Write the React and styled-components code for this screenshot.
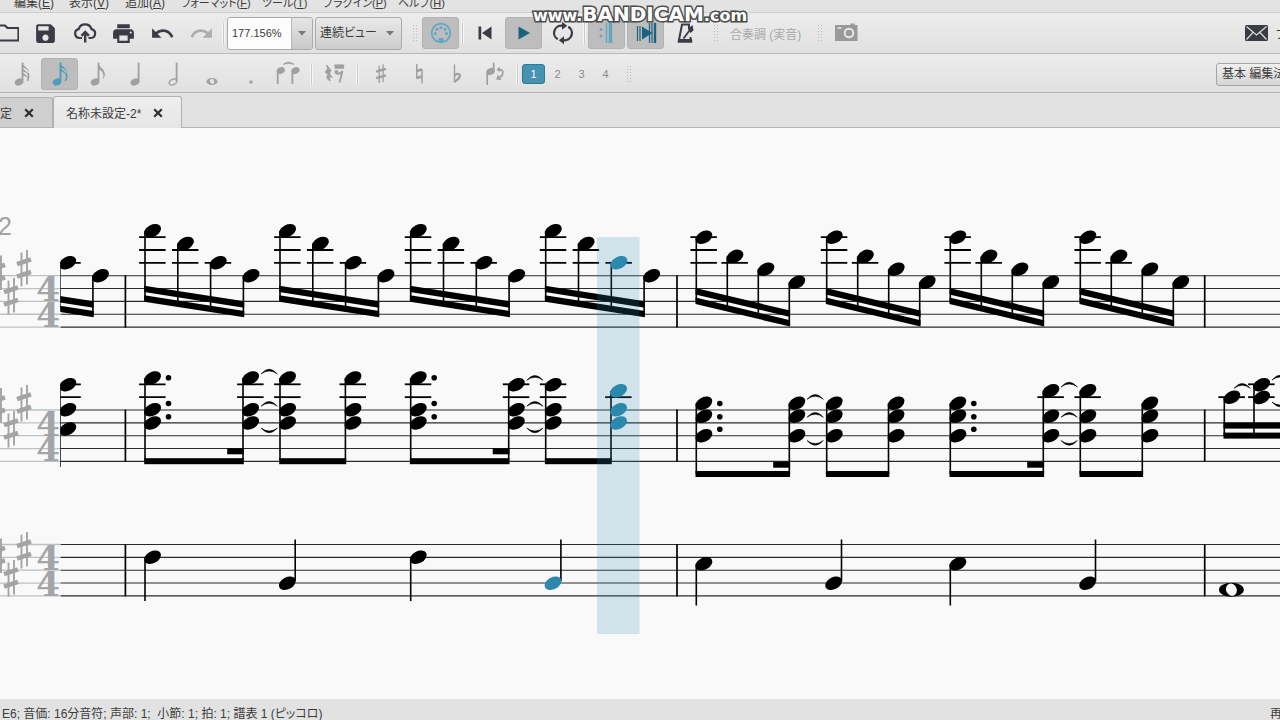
import React from 'react'
import styled, { createGlobalStyle, css } from 'styled-components'
import { MdSave, MdPrint, MdUndo, MdRedo } from 'react-icons/md'

const INK = '#3a3b44'
const MUTED = '#a0a0a0'
const BLUE = '#2e87ad'
const LIGHTBLUE = '#62a6c2'
const TEAL = '#1b6280'

const GlobalStyle = createGlobalStyle`
  * { box-sizing: border-box; }
  body {
    margin: 0;
    overflow: hidden;
    background: #e3e3e3;
    color: #3c3c3c;
    font-family: "Liberation Sans", "Noto Sans CJK JP", sans-serif;
    font-size: 12px;
  }
  button, select, input { font: inherit; color: inherit; }
  svg { flex: none; }
`

const Window = styled.div`
  display: flex;
  flex-direction: column;
  height: 100vh;
  overflow: hidden;
`

//Menu
const MenuBar = styled.nav`
  display: grid;
  grid-template-columns: 55px 56px 56px 81px 61px 75px 60px;
  align-content: end;
  flex: none;
  height: 12px;
  padding-left: 14px;
  overflow: hidden;
  white-space: nowrap;
`
const MenuLink = styled.a`
  color: inherit;
  text-decoration: none;
  line-height: 18px;
  font-size: ${p => (p.$kana ? '11px' : '12px')};
  font-feature-settings: "palt";
`

//Toolbars
const Toolbar = styled.div`
  display: flex;
  align-items: center;
  flex: none;
  gap: ${p => p.$gap}px;
  height: ${p => p.$height}px;
  padding: ${p => p.$pad || 0};
  overflow: hidden;
  border-top: 1px solid ${p => p.$edge};
  background: linear-gradient(#ececec, #e1e1e1);
`
const ToolButton = styled.button`
  display: flex;
  align-items: center;
  justify-content: center;
  flex: none;
  width: 37px;
  height: 32px;
  padding: 0;
  border: 1px solid transparent;
  border-radius: 3px;
  background: none;
  ${p => p.$bleed && css`margin-left: -12px;`}
  ${p => p.$on && css`
    background: #bdbdbd;
    border-color: #b3b3b3;
  `}
`
const Separator = styled.i`
  flex: none;
  width: ${p => p.$width}px;
  height: 21px;
  background: linear-gradient(#c9c9c9, #c9c9c9) center / 1px 100% no-repeat,
    linear-gradient(#f6f6f6, #f6f6f6) center / 3px 100% no-repeat;
`
const Grip = styled.i`
  flex: none;
  width: 6px;
  height: 18px;
  margin: 0 2px 0 8px;
  background: radial-gradient(circle, #bcbcbc 35%, transparent 45%) 0 0 / 3px 3px;
`
const ZoomBox = styled.div`
  display: flex;
  flex: none;
  width: 86px;
  height: 33px;
  border: 1px solid #ababab;
  border-radius: 3px;
  overflow: hidden;
`
const ZoomInput = styled.input`
  flex: 1;
  min-width: 0;
  padding: 0 0 0 4px;
  border: 0;
  background: #fcfcfc;
  font-size: 11px;
`
const ArrowButton = styled.button`
  display: flex;
  align-items: center;
  justify-content: center;
  width: 21px;
  padding: 0;
  border: 0;
  border-left: 1px solid #b9b9b9;
  background: linear-gradient(#e6e6e6, #c9c9c9);
`
const SelectBox = styled.label`
  display: flex;
  align-items: center;
  flex: none;
  width: 87px;
  height: 33px;
  padding: 0 6px 0 4px;
  border: 1px solid #ababab;
  border-radius: 3px;
  background: linear-gradient(#e9e9e9, #cdcdcd);
`
const ViewSelect = styled.select`
  appearance: none;
  flex: 1;
  min-width: 0;
  padding: 0;
  border: 0;
  background: none;
  font-feature-settings: "palt";
`
const PitchButton = styled.button`
  flex: none;
  padding: 0 6px 0 7px;
  border: 0;
  background: none;
  color: #a9a9a9;
  white-space: nowrap;
`
const FeedbackButton = styled.button`
  display: flex;
  align-items: center;
  gap: 7px;
  flex: none;
  width: 35px;
  margin-left: auto;
  padding: 0;
  border: 0;
  background: none;
  overflow: hidden;
`
const VoiceButton = styled.button`
  flex: none;
  width: 23px;
  height: 20px;
  padding: 0;
  border: 1px solid ${p => (p.$on ? '#2f7896' : 'transparent')};
  border-radius: 3px;
  background: ${p => (p.$on ? '#4792b0' : 'none')};
  color: ${p => (p.$on ? '#fff' : '#8a8a8a')};
  font-size: 11px;
`
const WorkspaceSlot = styled.div`
  flex: none;
  width: 64px;
  margin-left: auto;
  overflow: hidden;
`
const WorkspaceButton = styled.button`
  width: 90px;
  height: 23px;
  padding: 0 0 0 5px;
  border: 1px solid #a5a5a5;
  border-radius: 3px;
  background: linear-gradient(#efefef, #d6d6d6);
  text-align: left;
  line-height: 18px;
  white-space: nowrap;
`

//Document tabs
const TabBar = styled.div`
  display: flex;
  align-items: flex-end;
  flex: none;
  height: 36px;
  border-top: 1px solid #b4b4b4;
  border-bottom: 1px solid #b4b4b4;
  background: #e2e2e2;
`
const Tab = styled.div`
  display: flex;
  align-items: center;
  gap: 12px;
  flex: none;
  height: ${p => (p.$on ? 32 : 30)}px;
  margin-bottom: ${p => (p.$on ? -1 : 0)}px;
  margin-left: ${p => (p.$first ? -61 : 0)}px;
  padding: 0 18px 0 12px;
  border: 1px solid #b1b1b1;
  border-bottom: 0;
  border-radius: 3px 3px 0 0;
  background: ${p => (p.$on ? 'linear-gradient(#eeeeee, #e6e6e6)' : '#cfcfcf')};
`
const TabTitle = styled.span`
  white-space: nowrap;
`
const CloseButton = styled.button`
  display: flex;
  padding: 0;
  border: 0;
  background: none;
`

//Score
const ScoreArea = styled.main`
  flex: 1;
  min-height: 0;
  overflow: hidden;
  background: #f9f9f9;
`
const ScoreSvg = styled.svg`
  display: block;
  width: 100%;
  height: 100%;
`
const StatusBar = styled.footer`
  display: flex;
  justify-content: space-between;
  flex: none;
  height: 21px;
  padding: 6px 0 0 2px;
  overflow: hidden;
  background: #e2e2e2;
  line-height: 18px;
  white-space: pre;
`
const StatusText = styled.span`
  font-feature-settings: "palt";
`
const StatusMode = styled.span`
  width: 10px;
  overflow: hidden;
`

//Recorder stamp on top of everything
const Watermark = styled.div`
  position: absolute;
  top: 3px;
  left: 50%;
  transform: translateX(-50%);
  color: #fff;
  font: bold 16px/22px "DejaVu Sans", sans-serif;
  white-space: nowrap;
  -webkit-text-stroke: 3px #484848;
  paint-order: stroke fill;
  text-shadow: 0 0 2px #666;
  pointer-events: none;
`
const WatermarkBrand = styled.span`
  font-size: 20px;
`

const Icon = ({ w = 24, h = 24, children }) => (
  <svg width={w} height={h} viewBox={`0 0 ${w} ${h}`} fill="none" aria-hidden="true">{children}</svg>
)

const Triangle = () => (
  <Icon w={10} h={6}><path d="M1 1h8L5 5.600z" fill="#777" /></Icon>
)

const FolderIcon = () => (
  <Icon><path d="M3 19.500V4.500h7l2.500 2.500H23.500v12.500z" stroke={INK} strokeWidth="2.200" strokeLinejoin="round" /></Icon>
)
const CloudIcon = () => (
  <Icon>
    <path d="M9 17H6.500a4.500 4.500 0 0 1-.8-8.900 6.700 6.700 0 0 1 12.800 0A4.500 4.500 0 0 1 18 17h-2.500" stroke={INK} strokeWidth="2.200" />
    <path d="M12.200 21.500V12M8.500 14.800l3.700-3.800 3.700 3.800" stroke={INK} strokeWidth="2.400" />
  </Icon>
)
const MidiIcon = () => (
  <Icon>
    <circle cx="12" cy="12" r="9.300" stroke={LIGHTBLUE} strokeWidth="1.800" />
    <g fill={LIGHTBLUE}>
      <circle cx="6.300" cy="12.500" r="1.500" />
      <circle cx="8" cy="8.300" r="1.500" />
      <circle cx="12" cy="6.500" r="1.500" />
      <circle cx="16" cy="8.300" r="1.500" />
      <circle cx="17.700" cy="12.500" r="1.500" />
      <path d="M9.500 21v-4h5v4z" />
    </g>
  </Icon>
)
const RewindIcon = () => (
  <Icon><path d="M5.500 5.500h2.700v13H5.500zM18.500 5.500v13L9 12z" fill={INK} /></Icon>
)
const PlayIcon = () => (
  <Icon><path d="M6.500 5.500l11.500 6.500-11.500 6.500z" fill={TEAL} /></Icon>
)
const LoopIcon = () => (
  <Icon>
    <path d="M6.800 18.200A7.200 7.200 0 0 1 11.500 4.800M17.200 5.800A7.200 7.200 0 0 1 12.500 19.200" stroke={INK} strokeWidth="2.300" />
    <path d="M11 .8l5.200 4-5.200 4zM13 15.200l-5.200 4 5.200 4z" fill={INK} />
  </Icon>
)
const RepeatIcon = () => (
  <Icon>
    <path d="M11.500 2v20" stroke={LIGHTBLUE} strokeWidth="1.500" />
    <path d="M15.500 2v20" stroke={LIGHTBLUE} strokeWidth="3.500" />
    <circle cx="6" cy="8.500" r="1.500" fill={LIGHTBLUE} />
    <circle cx="6" cy="15" r="1.500" fill={LIGHTBLUE} />
  </Icon>
)
const PanIcon = () => (
  <Icon>
    <path d="M3.500 5v15M6 5v15M15.500 2v20M18 2v20" stroke={TEAL} strokeWidth="1.200" />
    <path d="M21 2v20" stroke={TEAL} strokeWidth="2.400" />
    <path d="M8 5.500l10.500 6.500L8 18.500z" fill={TEAL} />
  </Icon>
)
const MetronomeIcon = () => (
  <Icon>
    <path d="M16 8v-4.500H9L5.700 20.500h12.600l-1-4.500" stroke={INK} strokeWidth="2" />
    <path d="M5.500 18h13v3.500h-13z" fill={INK} />
    <path d="M10.500 17.500L18 7.500" stroke={INK} strokeWidth="1.800" />
    <path d="M15 8l4.500-4 1 5.500-3 2.500z" fill={INK} />
  </Icon>
)
const CameraIcon = () => (
  <Icon>
    <path d="M1 4h15.500V2.500h4V4H23.500v16H1z" fill="#999" />
    <path d="M3.500 7h4" stroke="#e8e8e8" strokeWidth="1.500" />
    <circle cx="15" cy="12" r="4.300" stroke="#e8e8e8" strokeWidth="2" />
  </Icon>
)
const MailIcon = () => (
  <Icon w={23} h={16}>
    <rect width="23" height="16" rx="1.500" fill={INK} />
    <path d="M1.500 1.500l10 8.500 10-8.500M1.500 14.500l6.500-7M21.500 14.500l-6.500-7" stroke="#dedede" strokeWidth="1.200" />
  </Icon>
)

const NoteIcon = ({ flags, color = MUTED }) => (
  <Icon w={24} h={28}>
    <ellipse cx="9" cy="22" rx="4.400" ry="3.400" transform="rotate(-25 9 22)" fill={color} />
    <path d="M12.500 21.500V2.500" stroke={color} strokeWidth="1.800" />
    {flags === 1 && <path d="M12 2.500c.6 4.800 6.800 6 6.800 11.500 0 2-.7 3.700-1.800 5.500 1.300-5.800-.5-8.800-5-10.500z" fill={color} />}
    {flags > 1 && [...Array(flags)].map((_, i) => (
      <path key={i} d={`M12 ${2.5 + i * 4}c.5 4 7 4.500 7 10-1-2.800-3.500-4.500-7-5.500z`} fill={color} />
    ))}
    {flags > 1 && <path d="M18.200 13c.9 2.500.6 5-.8 8" stroke={color} strokeWidth="1.500" />}
  </Icon>
)
const QuarterIcon = ({ half }) => (
  <Icon w={24} h={28}>
    {half
      ? <ellipse cx="11" cy="22" rx="4" ry="2.700" transform="rotate(-28 11 22)" stroke={MUTED} strokeWidth="1.300" />
      : <ellipse cx="11" cy="22" rx="4.500" ry="3.400" transform="rotate(-25 11 22)" fill={MUTED} />}
    <path d="M14.600 21.500V2.500" stroke={MUTED} strokeWidth="1.800" />
  </Icon>
)
const WholeIcon = () => (
  <Icon w={24} h={28}>
    <path fillRule="evenodd" d="M6.500 21.500a5.500 3.500 0 1 0 11 0a5.500 3.500 0 1 0-11 0zM9.800 20.500c-.3 2 1.200 3.300 2.700 3.200s1.900-1.300 1.700-2.200c-.3-2-1.500-2.500-2.700-2.400s-1.600.7-1.700 1.400z" fill={MUTED} />
  </Icon>
)
const DotIcon = () => (
  <Icon w={24} h={28}><circle cx="13" cy="22" r="1.700" fill={MUTED} /></Icon>
)
const TieIcon = () => (
  <Icon w={24} h={28}>
    <path d="M7 4.500c3-3 8-3 11 0-3-1.300-8-1.300-11 0z" fill={MUTED} stroke={MUTED} strokeWidth=".8" />
    <ellipse cx="4.800" cy="10.500" rx="4.200" ry="3.200" transform="rotate(-25 4.800 10.500)" fill={MUTED} />
    <ellipse cx="19.500" cy="10.500" rx="4.200" ry="3.200" transform="rotate(-25 19.500 10.500)" fill={MUTED} />
    <path d="M1.700 10.500V24M16.400 10.500V24" stroke={MUTED} strokeWidth="1.800" />
  </Icon>
)
const RestIcon = () => (
  <Icon w={24} h={28}>
    <path d="M3.500 5l4.300 5.500c-2 2-1.800 3.500.7 6.300-2.500-.5-3.300 1-1.300 4-3.500-2-4.800-5.300-1-5.500L2.500 12C5 9.500 5 8 3.500 5z" fill={MUTED} stroke={MUTED} strokeWidth="1.200" />
    <path d="M12 5h8.500v3.300H12zM11 5.300h10.500" fill={MUTED} stroke={MUTED} />
    <circle cx="13.500" cy="12" r="2" fill={MUTED} />
    <path d="M13 13.500c3 .8 5 0 6.500-2.500l-3 11.500" stroke={MUTED} strokeWidth="1.800" />
  </Icon>
)
const SharpGlyph = ({ color = MUTED }) => (
  <g stroke={color}>
    <path d="M-2.500-15.500V18.500M3-18v34.500" strokeWidth="1.900" />
    <path d="M-7-3.800L7-8.700M-7 8.700L7 3.800" strokeWidth="4.600" />
  </g>
)
const SharpIcon = () => (
  <Icon w={24} h={28}><g transform="translate(12 13.500) scale(.7 .52)"><SharpGlyph /></g></Icon>
)
const NaturalIcon = () => (
  <Icon w={24} h={28}>
    <path d="M9.800 4v14.500M15 9v14.500" stroke={MUTED} strokeWidth="1.500" />
    <path d="M9.500 11l5.500-1.500M9.500 18l5.500-1.500" stroke={MUTED} strokeWidth="2.700" />
  </Icon>
)
const FlatIcon = () => (
  <Icon w={24} h={28}>
    <path d="M9.500 4.500v18" stroke={MUTED} strokeWidth="1.500" />
    <path d="M9.500 15.500c3-2.800 5.700-1.500 5.300.8-.3 1.900-2.500 3.700-5.300 5.600" stroke={MUTED} strokeWidth="2.200" />
  </Icon>
)
const FlipIcon = () => (
  <Icon w={24} h={28}>
    <ellipse cx="7.500" cy="11.500" rx="4.400" ry="3.300" transform="rotate(-25 7.500 11.500)" fill={MUTED} />
    <path d="M4.200 12v13M10.700 11V2.500" stroke={MUTED} strokeWidth="1.700" />
    <path d="M15 9.500c4-1 6 2 4.500 5-.8 1.500-2 2.700-3.700 3.800" stroke={MUTED} strokeWidth="1.700" />
    <path d="M16.500 6.500l-3 3.500 4 2zM15 14.500l-2 5 5.500.5z" fill={MUTED} />
  </Icon>
)
const CloseIcon = () => (
  <Icon w={10} h={10}><path d="M1.200 1.200l7.600 7.600M8.800 1.200L1.200 8.800" stroke="#303030" strokeWidth="2.200" /></Icon>
)

// ---- score drawing ----
const STAVES = [275.7, 410, 544.5]
const BARLINES = [125.4, 677, 1204.7]
const LINE = 12.85

const Head = ({ stem, y, color = '#000' }) => (
  <ellipse cx={stem + 7.6} cy={y} rx="9" ry="6" transform={`rotate(-28 ${stem + 7.6} ${y})`} fill={color} />
)

// short lines above the staff down from the note
const Ledgers = ({ stem, y, top }) => {
  const lines = []
  for (let l = top - LINE; l > y - 4; l -= LINE) lines.push(l)
  return lines.map(l => (
    <path key={l} d={`M${stem - 5.9} ${l}h26.500`} stroke="#000" strokeWidth="1.800" />
  ))
}

const Stem = ({ x, from, to }) => <path d={`M${x} ${from}V${to}`} stroke="#000" strokeWidth="1.600" />

// four sixteenths under a sloped double beam
const Run = ({ x, step, ys, beam, drop, played }) => {
  const width = step * 3
  const yAt = i => beam + (drop * i) / 3
  const band = dy => `M${x - 0.8} ${beam + dy}L${x + width + 0.8} ${beam + drop + dy}v6.400L${x - 0.8} ${beam + dy + 6.4}z`
  return (
    <g>
      {ys.map((y, i) => (
        <g key={i}>
          <Ledgers stem={x + step * i} y={y} top={STAVES[0]} />
          <Stem x={x + step * i} from={y} to={yAt(i) + 14} />
          <Head stem={x + step * i} y={y} color={played === i ? BLUE : '#000'} />
        </g>
      ))}
      <path d={band(-0.3)} />
      <path d={band(9.3)} />
    </g>
  )
}

const Chord = ({ x, ys, to, dots = [], color }) => (
  <g>
    <Ledgers stem={x} y={ys[0]} top={STAVES[1]} />
    <Stem x={x} from={ys[0]} to={to} />
    {ys.map(y => <Head key={y} stem={x} y={y} color={color} />)}
    {dots.map(y => <circle key={y} cx={x + 23.5} cy={y} r="2.800" />)}
  </g>
)

const Beam = ({ from, to, y }) => <rect x={from - 0.8} y={y} width={to - from + 1.6} height="6" />

const Tie = ({ x, y, down }) => {
  const s = down ? 1 : -1
  return <path d={`M${x} ${y}q8.200 ${s * 9.6} 16.400 0q-8.200 ${s * 6} -16.400 0z`} stroke="#000" strokeWidth=".5" />
}

const RUN_A = [230.7, 243.6, 262.8, 275.7]
const RUN_B = [237.2, 256.4, 269.3, 282.3]
const D_CHORD = [378, 409.7, 423]
const C_CHORD = [384.7, 409.7, 423]
const B_CHORD = [390.7, 409.7, 423]
const E_LOW = [403.3, 416.3, 435.7]
const E_HIGH = [390.7, 416.3, 435.7]
const DOTS_A = [377.7, 403.5, 416.7]
const DOTS_B = [403.5, 416.7, 429.3]

const QUARTERS = [
  { x: 145, y: 557.3, down: 601 },
  { x: 279.7, y: 583.3 },
  { x: 410.7, y: 557.3, down: 601 },
  { x: 545.4, y: 583.3, color: BLUE },
  { x: 696.3, y: 563.7, down: 605.5 },
  { x: 826, y: 583.3 },
  { x: 950.3, y: 563.7, down: 605.5 },
  { x: 1080, y: 583.3 },
]

const PANEL_SHARPS = [
  [[-2, 273.5], [11, 296], [24, 268]],
  [[-2, 406], [11, 429], [24, 403]],
  [[-2, 556.5], [11, 578], [24, 550]],
]

function Score() {
  return (
    <ScoreSvg role="img" aria-label="楽譜">
      <defs>
        <clipPath id="music"><rect x="60.300" y="128" width="100%" height="600" /></clipPath>
      </defs>
      <g transform="translate(0 -128)">
        {STAVES.map((top, s) => (
          <g key={top}>
            {[0, 1, 2, 3, 4].map(i => (
              <g key={i}>
                <line x1="0" x2="60" y1={top + i * LINE} y2={top + i * LINE} stroke="#bdc1c0" strokeWidth="1.300" />
                <line x1="60.500" x2="100%" y1={top + i * LINE} y2={top + i * LINE} stroke="#2a2a2a" strokeWidth="1.100" />
              </g>
            ))}
            {PANEL_SHARPS[s].map(([x, y]) => (
              <g key={x} transform={`translate(${x} ${y})`}><SharpGlyph color="#a3a5a5" /></g>
            ))}
            {[2, 4].map(n => (
              <text key={n} x="48" y={top + n * LINE - 0.2} textAnchor="middle" fontFamily="DejaVu Serif" fontWeight="bold" fontSize="34" fill="#a3a5a8">4</text>
            ))}
            {BARLINES.map(x => (
              <path key={x} d={`M${x} ${top - 0.5}v${LINE * 4 + 1}`} stroke="#000" strokeWidth="1.700" />
            ))}
          </g>
        ))}
        <text x="-2" y="235" fontFamily="Liberation Sans" fontSize="25" fill="#a3a3a3">2</text>

        <g clipPath="url(#music)">
          <Run x={-5.5} step={32.8} ys={[300, 300, 262.8, 275.7]} beam={286} drop={15.6} />
          {[145, 280, 410.7].map(x => <Run key={x} x={x} step={32.8} ys={RUN_A} beam={286} drop={15.6} />)}
          <Run x={545.7} step={32.8} ys={RUN_A} beam={286} drop={15.6} played={2} />
          {[696.3, 826.7, 950.3, 1080.3].map(x => <Run key={x} x={x} step={31} ys={RUN_B} beam={288.3} drop={22.6} />)}

          <Chord x={60.2} ys={[384.7, 409.7, 429]} to={467} />

          <Chord x={145} ys={D_CHORD} to={460} dots={DOTS_A} />
          <Chord x={243} ys={D_CHORD} to={460} />
          <Beam from={145} to={243} y={458.2} />
          <Beam from={228} to={243} y={448.3} />
          <Tie x={261} y={374} /><Tie x={261} y={406.3} /><Tie x={261} y={428} down />
          <Chord x={280} ys={D_CHORD} to={460} />
          <Chord x={345.4} ys={D_CHORD} to={460} />
          <Beam from={280} to={345.4} y={458.2} />
          <Chord x={410.7} ys={D_CHORD} to={460} dots={DOTS_A} />
          <Chord x={508.7} ys={C_CHORD} to={460} />
          <Beam from={410.7} to={508.7} y={458.2} />
          <Beam from={493.5} to={508.7} y={448.3} />
          <Tie x={526.7} y={380.3} /><Tie x={526.7} y={406.3} /><Tie x={526.7} y={428} down />
          <Chord x={545.7} ys={C_CHORD} to={460} />
          <Chord x={611} ys={B_CHORD} to={460} color={BLUE} />
          <Beam from={545.7} to={611} y={458.2} />

          <Chord x={696.3} ys={E_LOW} to={474} dots={DOTS_B} />
          <Chord x={789.3} ys={E_LOW} to={474} />
          <Beam from={696.3} to={789.3} y={471} />
          <Beam from={774} to={789.3} y={461.7} />
          <Tie x={807} y={399.3} /><Tie x={807} y={417.3} /><Tie x={807} y={440.5} down />
          <Chord x={826.7} ys={E_LOW} to={474} />
          <Chord x={888.5} ys={E_LOW} to={474} />
          <Beam from={826.7} to={888.5} y={471} />
          <Chord x={950.3} ys={E_LOW} to={474} dots={DOTS_B} />
          <Chord x={1043.3} ys={E_HIGH} to={474} />
          <Beam from={950.3} to={1043.3} y={471} />
          <Beam from={1028} to={1043.3} y={461.7} />
          <Tie x={1061} y={387} /><Tie x={1061} y={417.3} /><Tie x={1061} y={440.5} down />
          <Chord x={1080.3} ys={E_HIGH} to={474} />
          <Chord x={1142.3} ys={E_LOW} to={474} />
          <Beam from={1080.3} to={1142.3} y={471} />

          <Chord x={1224.3} ys={[397.3]} to={436} />
          <Chord x={1254} ys={[384.7, 397.5]} to={436} />
          <Beam from={1224.3} to={1400} y={422.6} />
          <Beam from={1224.3} to={1400} y={432.6} />
          <Tie x={1234} y={388.3} /><Tie x={1272} y={380} /><Tie x={1272} y={402} down />

          {QUARTERS.map(q => (
            <g key={q.x}>
              {q.down
                ? <Stem x={q.x} from={q.y} to={q.down} />
                : <Stem x={q.x + 15.5} from={539.5} to={q.y - 2} />}
              <Head stem={q.x} y={q.y} color={q.color} />
            </g>
          ))}
          <ellipse cx="1231.400" cy="589.700" rx="12.400" ry="7" />
          <ellipse cx="1231.400" cy="589.700" rx="5.300" ry="6.300" transform="rotate(-24 1231.400 589.700)" fill="#f9f9f9" />
        </g>
        <rect x="597" y="237" width="42.500" height="397" fill="rgba(46,138,180,.2)" />
      </g>
    </ScoreSvg>
  )
}

const MENUS = [
  ['編集', 'E'], ['表示', 'V'], ['追加', 'A'], ['フォーマット', 'F', true],
  ['ツール', 'T', true], ['プラグイン', 'P', true], ['ヘルプ', 'H', true],
]

function App() {
  return (
    <Window>
      <GlobalStyle />
      <MenuBar>
        {MENUS.map(([name, key, kana]) => (
          <MenuLink key={key} href="#" $kana={kana}>{name}(<u>{key}</u>)</MenuLink>
        ))}
      </MenuBar>

      <Toolbar $gap={2} $height={41} $edge="#cfcfcf">
        <ToolButton $bleed aria-label="開く"><FolderIcon /></ToolButton>
        <ToolButton aria-label="保存"><MdSave size={25} color={INK} /></ToolButton>
        <ToolButton aria-label="オンラインに保存"><CloudIcon /></ToolButton>
        <ToolButton aria-label="印刷"><MdPrint size={25} color={INK} /></ToolButton>
        <ToolButton aria-label="元に戻す"><MdUndo size={25} color={INK} /></ToolButton>
        <ToolButton aria-label="やり直し"><MdRedo size={25} color="#adadad" /></ToolButton>
        <Separator $width={3} />
        <ZoomBox>
          <ZoomInput aria-label="ズーム" defaultValue="177.156%" />
          <ArrowButton aria-label="ズーム一覧"><Triangle /></ArrowButton>
        </ZoomBox>
        <SelectBox>
          <ViewSelect aria-label="表示モード"><option>連続ビュー</option></ViewSelect>
          <Triangle />
        </SelectBox>
        <Grip />
        <ToolButton $on aria-label="MIDI入力"><MidiIcon /></ToolButton>
        <Separator $width={3} />
        <ToolButton aria-label="先頭へ"><RewindIcon /></ToolButton>
        <ToolButton $on aria-label="再生"><PlayIcon /></ToolButton>
        <ToolButton aria-label="ループ"><LoopIcon /></ToolButton>
        <Separator $width={3} />
        <ToolButton $on aria-label="リピート再生"><RepeatIcon /></ToolButton>
        <ToolButton $on aria-label="自動スクロール"><PanIcon /></ToolButton>
        <ToolButton aria-label="メトロノーム"><MetronomeIcon /></ToolButton>
        <Grip />
        <PitchButton>合奏調 (実音)</PitchButton>
        <Grip />
        <ToolButton aria-label="画像キャプチャ"><CameraIcon /></ToolButton>
        <FeedbackButton><MailIcon />フ</FeedbackButton>
      </Toolbar>

      <Toolbar $gap={1} $height={39} $pad="2px 0 0 3px" $edge="#b9b9b9">
        <ToolButton aria-label="32分音符"><NoteIcon flags={3} /></ToolButton>
        <ToolButton $on aria-label="16分音符"><NoteIcon flags={2} color="#4f9cbd" /></ToolButton>
        <ToolButton aria-label="8分音符"><NoteIcon flags={1} /></ToolButton>
        <ToolButton aria-label="4分音符"><QuarterIcon /></ToolButton>
        <ToolButton aria-label="2分音符"><QuarterIcon half /></ToolButton>
        <ToolButton aria-label="全音符"><WholeIcon /></ToolButton>
        <ToolButton aria-label="付点"><DotIcon /></ToolButton>
        <ToolButton aria-label="タイ"><TieIcon /></ToolButton>
        <Separator $width={8} />
        <ToolButton aria-label="休符"><RestIcon /></ToolButton>
        <Separator $width={7} />
        <ToolButton aria-label="シャープ"><SharpIcon /></ToolButton>
        <ToolButton aria-label="ナチュラル"><NaturalIcon /></ToolButton>
        <ToolButton aria-label="フラット"><FlatIcon /></ToolButton>
        <ToolButton aria-label="上下反転"><FlipIcon /></ToolButton>
        <Separator $width={7} />
        {[1, 2, 3, 4].map(v => <VoiceButton key={v} $on={v === 1}>{v}</VoiceButton>)}
        <Grip />
        <WorkspaceSlot><WorkspaceButton>基本 編集法</WorkspaceButton></WorkspaceSlot>
      </Toolbar>

      <TabBar>
        <Tab $first>
          <TabTitle>名称未設定</TabTitle>
          <CloseButton aria-label="閉じる"><CloseIcon /></CloseButton>
        </Tab>
        <Tab $on>
          <TabTitle>名称未設定-2*</TabTitle>
          <CloseButton aria-label="閉じる"><CloseIcon /></CloseButton>
        </Tab>
      </TabBar>

      <ScoreArea><Score /></ScoreArea>

      <StatusBar>
        <StatusText>E6; 音価: 16分音符; 声部: 1;  小節: 1; 拍: 1; 譜表 1 (ピッコロ)</StatusText>
        <StatusMode>再</StatusMode>
      </StatusBar>

      <Watermark>www.<WatermarkBrand>BANDICAM</WatermarkBrand>.com</Watermark>
    </Window>
  )
}

export default App
